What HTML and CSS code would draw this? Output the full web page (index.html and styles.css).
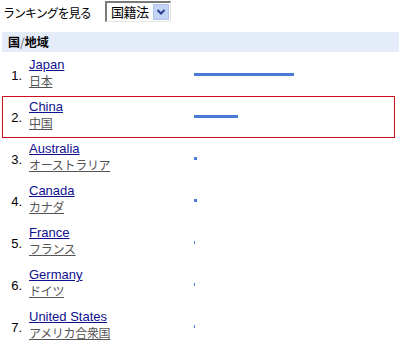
FILE: index.html
```html
<!DOCTYPE html>
<html>
<head>
<meta charset="utf-8">
<link rel="stylesheet" href="styles.css">
</head>
<body>
<div class="top">
  <span class="label">ランキングを見る</span>
  <div class="select">
    <span class="sel-text">国籍法</span>
    <span class="sel-btn"><svg width="10" height="8" viewBox="0 0 10 8"><path d="M1.5 2 L5 5.5 L8.5 2" fill="none" stroke="#2a3f8f" stroke-width="2"/></svg></span>
  </div>
</div>
<div class="table">
  <div class="thead">国<span class="slash">/</span>地域</div>
  <div class="row">
    <span class="num">1.</span>
    <div class="names"><a class="en" href="#">Japan</a><a class="ja" href="#">日本</a></div>
    <div class="barcell"><span class="bar" style="width:100px"></span></div>
  </div>
  <div class="row sel">
    <span class="num">2.</span>
    <div class="names"><a class="en" href="#">China</a><a class="ja" href="#">中国</a></div>
    <div class="barcell"><span class="bar" style="width:44px"></span></div>
  </div>
  <div class="row">
    <span class="num">3.</span>
    <div class="names"><a class="en" href="#">Australia</a><a class="ja" href="#">オーストラリア</a></div>
    <div class="barcell"><span class="bar" style="width:3px"></span></div>
  </div>
  <div class="row">
    <span class="num">4.</span>
    <div class="names"><a class="en" href="#">Canada</a><a class="ja" href="#">カナダ</a></div>
    <div class="barcell"><span class="bar" style="width:3px"></span></div>
  </div>
  <div class="row">
    <span class="num">5.</span>
    <div class="names"><a class="en" href="#">France</a><a class="ja" href="#">フランス</a></div>
    <div class="barcell"><span class="bar" style="width:1px"></span></div>
  </div>
  <div class="row">
    <span class="num">6.</span>
    <div class="names"><a class="en" href="#">Germany</a><a class="ja" href="#">ドイツ</a></div>
    <div class="barcell"><span class="bar" style="width:1px"></span></div>
  </div>
  <div class="row">
    <span class="num">7.</span>
    <div class="names"><a class="en" href="#">United States</a><a class="ja" href="#">アメリカ合衆国</a></div>
    <div class="barcell"><span class="bar" style="width:1px"></span></div>
  </div>
</div>
</body>
</html>
```

FILE: styles.css
```css
html, body {
  margin: 0;
  padding: 0;
  background: #fff;
}
body {
  font-family: "Liberation Sans", Arial, "Noto Sans CJK JP", sans-serif;
  font-size: 13px;
  color: #000;
}
.top {
  display: flex;
  align-items: center;
  height: 24px;
  padding: 0 0 0 3px;
  margin-bottom: 8px;
}
.label {
  font-family: "Noto Sans CJK JP", sans-serif;
  font-size: 12px;
  letter-spacing: -1px;
  width: 102px;
}
.select {
  display: flex;
  align-items: center;
  justify-content: space-between;
  box-sizing: border-box;
  width: 66px;
  height: 21px;
  margin-top: -2px;
  border-top: 2px solid #7a7a7a;
  border-left: 2px solid #7a7a7a;
  border-right: 1px solid #e4e4e4;
  border-bottom: 1px solid #e4e4e4;
  padding: 0 1px 0 4px;
}
.sel-text {
  font-family: "Noto Sans CJK JP", sans-serif;
  font-size: 13px;
  letter-spacing: -0.5px;
}
.sel-btn {
  display: flex;
  align-items: center;
  justify-content: center;
  width: 16px;
  height: 16px;
  background: #c3d3f3;
  border: 1px solid #b0c3ea;
  box-sizing: border-box;
}
.table {
  padding-left: 2px;
}
.thead {
  height: 20px;
  margin-right: 4px;
  background: #e5ecf9;
  font-family: "Noto Sans CJK JP", sans-serif;
  font-weight: bold;
  font-size: 12px;
  line-height: 20px;
  padding-left: 6px;
  margin-bottom: 2px;
}
.slash {
  color: #666;
  font-weight: normal;
}
.row {
  display: flex;
  align-items: center;
  box-sizing: border-box;
  height: 42px;
  margin-right: 8px;
  border: 1px solid transparent;
}
.row.sel {
  border-color: #cc1020;
}
.num {
  width: 19px;
  text-align: right;
  font-size: 13px;
}
.names {
  display: flex;
  flex-direction: column;
  width: 165px;
  padding-left: 7px;
  margin-bottom: 4px;
}
.en {
  color: #101090;
  text-decoration: underline;
  font-size: 13px;
  line-height: 16px;
  align-self: flex-start;
}
.ja {
  color: #555;
  text-decoration: underline;
  font-family: "Noto Sans CJK JP", sans-serif;
  font-size: 12px;
  letter-spacing: -0.3px;
  line-height: 16px;
  align-self: flex-start;
}
.barcell {
  display: flex;
  align-items: center;
  flex: 1;
  margin-bottom: 2px;
}
.bar {
  display: block;
  height: 3px;
  background: #4a7ad8;
}
```
